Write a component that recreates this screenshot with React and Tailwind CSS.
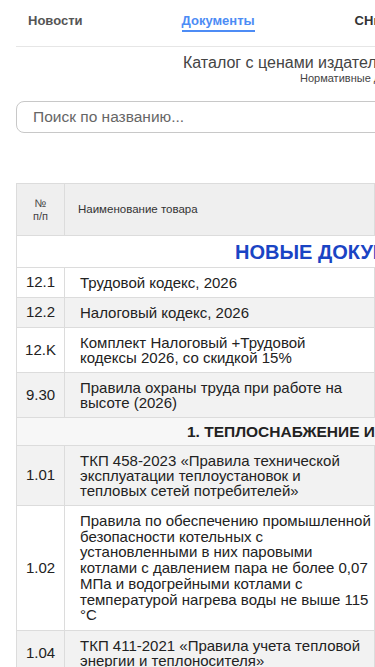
import React from 'react';

const rows = [
  { type: 'section', text: 'НОВЫЕ ДОКУМЕНТЫ', tone: 'blue' },
  { n: '12.1', lines: ['Трудовой кодекс, 2026'], bg: 'bg-white' },
  { n: '12.2', lines: ['Налоговый кодекс, 2026'], bg: 'bg-[#f2f2f2]' },
  { n: '12.K', lines: ['Комплект Налоговый +Трудовой', 'кодексы 2026, со скидкой 15%'], bg: 'bg-white' },
  { n: '9.30', lines: ['Правила охраны труда при работе на', 'высоте (2026)'], bg: 'bg-[#f2f2f2]' },
  { type: 'section', text: '1. ТЕПЛОСНАБЖЕНИЕ И ТЕПЛОИСПОЛЬЗОВАНИЕ', tone: 'dark' },
  {
    n: '1.01',
    lines: ['ТКП 458-2023 «Правила технической', 'эксплуатации теплоустановок и', 'тепловых сетей потребителей»'],
    bg: 'bg-[#f2f2f2]',
  },
  {
    n: '1.02',
    lines: [
      'Правила по обеспечению промышленной',
      'безопасности котельных с',
      'установленными в них паровыми',
      'котлами с давлением пара не более 0,07',
      'МПа и водогрейными котлами с',
      'температурой нагрева воды не выше 115',
      '°C',
    ],
    bg: 'bg-white',
    tall: true,
  },
  { n: '1.04', lines: ['ТКП 411-2021 «Правила учета тепловой', 'энергии и теплоносителя»'], bg: 'bg-[#f2f2f2]' },
];

export default function App() {
  return (
    <div className="w-[375px] h-[667px] overflow-hidden bg-white font-['Liberation_Sans',Arial,sans-serif]">
      <div className="w-[640px]">
        {/* tabs */}
        <div className="flex items-start pl-[28px] pt-[13px] h-[46px] text-[13px] font-bold">
          <span className="text-[#555] leading-[15px]">Новости</span>
          <span className="ml-[99px] text-[#4d8cf5] leading-[15px] pb-[2px] border-b-2 border-[#4d8cf5]">Документы</span>
          <span className="ml-[100px] text-[#333] leading-[15px]">СНиПы</span>
        </div>
        <div className="ml-[16px] h-px bg-[#e6e6e6]" />

        {/* title */}
        <div className="pl-[183px] pt-[6px] whitespace-nowrap">
          <div className="text-[16px] leading-[19px] text-[#444]">Каталог с ценами издательства</div>
          <div className="pl-[117px] text-[11px] leading-[13px] text-[#444]">Нормативные документы</div>
        </div>

        {/* search */}
        <div className="pl-[16px] pt-[16px]">
          <div className="w-[500px] h-[32px] rounded-[8px] border border-[#c8c8c8] flex items-center pl-[16px] text-[15.5px] text-[#666]">
            Поиск по названию...
          </div>
        </div>

        {/* table */}
        <div className="pl-[16px] pt-[50px]">
          <table className="table-fixed w-[480px] border-collapse text-[#222]">
            <colgroup>
              <col className="w-[48px]" />
              <col className="w-[310px]" />
              <col className="w-[122px]" />
            </colgroup>
            <thead>
              <tr className="bg-[#efefef] h-[52px]">
                <th className="border border-[#dcdcdc] font-normal text-[11px] leading-[13px] text-[#444] text-center">
                  №<br />п/п
                </th>
                <th className="border border-[#dcdcdc] font-normal text-[11.5px] text-[#333] text-left pl-[13px]">
                  Наименование товара
                </th>
                <th className="border border-[#dcdcdc] font-normal text-[11.5px] text-[#333]">Цена</th>
              </tr>
            </thead>
            <tbody>
              {rows.map((r, i) =>
                r.type === 'section' ? (
                  <tr key={i} className={r.tone === 'blue' ? 'bg-white h-[32px]' : 'bg-[#f7f7f7] h-[28px]'}>
                    <td
                      colSpan={3}
                      className={
                        r.tone === 'blue'
                          ? 'border border-[#dcdcdc] font-bold text-[20px] leading-[24px] text-[#1a44c4] pl-[218px] whitespace-nowrap'
                          : 'border border-[#dcdcdc] font-bold text-[15.5px] leading-[18px] text-[#222] pl-[170px] whitespace-nowrap'
                      }
                    >
                      {r.text}
                    </td>
                  </tr>
                ) : (
                  <tr key={i} className={r.bg}>
                    <td className="border border-[#dcdcdc] text-center text-[15px] text-[#222] align-middle">{r.n}</td>
                    <td
                      className={
                        r.tall
                          ? 'border border-[#dcdcdc] text-[15px] leading-[15.7px] pl-[15px] pr-[4px] py-[7px] text-[#222]'
                          : 'border border-[#dcdcdc] text-[15px] leading-[15px] pl-[15px] pr-[4px] py-[7px] text-[#222]'
                      }
                    >
                      {r.lines.map((l, j) => (
                        <div key={j} className="whitespace-nowrap">
                          {l}
                        </div>
                      ))}
                    </td>
                    <td className="border border-[#dcdcdc]" />
                  </tr>
                )
              )}
            </tbody>
          </table>
        </div>
      </div>
    </div>
  );
}
